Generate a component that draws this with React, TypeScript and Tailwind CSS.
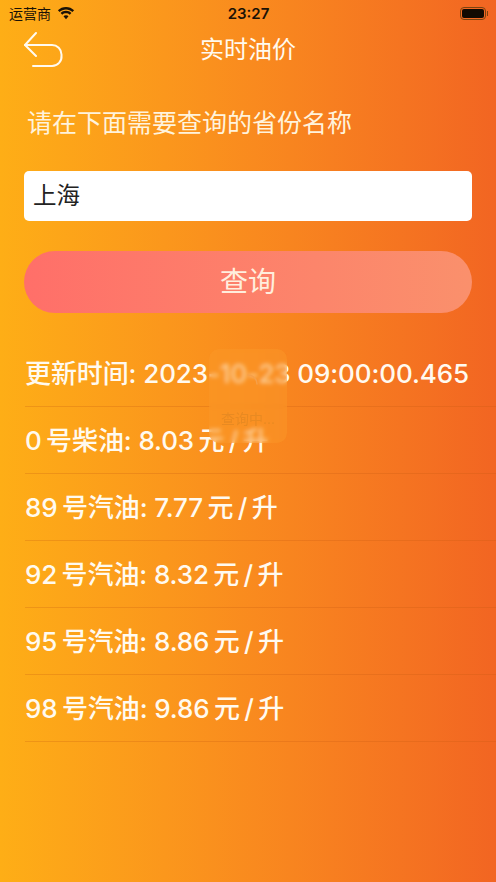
const font = "font-['Inter','Noto_Sans_CJK_SC',sans-serif]";

function Wifi() {
  return (
    <svg width="18" height="13" viewBox="0 0 18 13" fill="#1a1206">
      <path d="M9 2.600c2.500 0 4.700 1 6.400 2.500l1.700-1.800C15 1.200 12.100 0 9 0S3 1.200.9 3.300l1.700 1.800C4.300 3.600 6.500 2.600 9 2.600z" />
      <path d="M9 6.300c1.500 0 2.700.5 3.700 1.400l1.700-1.800C13 4.600 11.100 3.800 9 3.800S5 4.600 3.600 5.900l1.700 1.800c1-.9 2.200-1.400 3.700-1.400z" />
      <path d="M9 8.300c-1 0-1.900.4-2.500 1L9 12.200l2.500-2.900c-.6-.6-1.500-1-2.500-1z" />
    </svg>
  );
}

function Battery() {
  return (
    <div className="flex items-center justify-end">
      <div className="w-[26px] h-[13px] rounded-[4px] border border-[#7a4310] p-[1px]">
        <div className="w-full h-full rounded-[2px] bg-[#120a02]" />
      </div>
      <div className="w-[1px] h-[5px] bg-[#7a4310] ml-[1px]" />
    </div>
  );
}

function Row({ children }: { children: React.ReactNode }) {
  return (
    <div className="h-[67px] flex items-center border-b border-[#c2570f]/25 text-[26px] font-medium tracking-[-0.1px] text-[#fffaf0] whitespace-nowrap">
      {children}
    </div>
  );
}

export default function App() {
  return (
    <div className={`relative w-[496px] h-[882px] overflow-hidden bg-gradient-to-r from-[#feae16] to-[#f26522] ${font}`}>
      <div className="h-[27px] grid grid-cols-3 items-center pl-[9px] pr-[8px] text-[#1a1206]">
        <div className="flex items-center gap-[6px]">
          <span className="text-[14px] leading-none">运营商</span>
          <Wifi />
        </div>
        <span className="text-[15px] font-semibold leading-none text-center">23:27</span>
        <Battery />
      </div>

      <div className="h-[46px] pl-[24px] flex items-center relative">
        <svg width="40" height="38" viewBox="0 0 40 38" fill="none" stroke="#fffaf0" strokeWidth="2" strokeLinecap="round" strokeLinejoin="round">
          <path d="M12 2 1 14l11 11" />
          <path d="M1 14h27a9.500 9.500 0 0 1 9.500 9.500v1A9.500 9.500 0 0 1 28 35H9" />
        </svg>
        <div className="absolute left-0 right-0 text-center text-[24px] leading-none text-[#fffaf0]">实时油价</div>
      </div>

      <div className="mt-[27px] pl-[27px] text-[25px] leading-[46px] text-[#fff3dc]">请在下面需要查询的省份名称</div>

      <div className="mx-[24px] mt-[25px] h-[50px] bg-white rounded-[5px] flex items-center pl-[9px] text-[23.500px] text-[#222222]">上海</div>

      <div className="mx-[24px] mt-[30px] h-[62px] rounded-full bg-gradient-to-r from-[#ff6f69] to-[#fa906c] flex items-center justify-center text-[28px] text-[#ffeedd]">查询</div>

      <div className="mt-[27px] pl-[25px]">
        <Row>更新时间: 2023-10-23 09:00:00.465</Row>
        <Row>0&#8201;号柴油: 8.03&#8201;元&#8201;/&#8201;升</Row>
        <Row>89&#8201;号汽油: 7.77&#8201;元&#8201;/&#8201;升</Row>
        <Row>92&#8201;号汽油: 8.32&#8201;元&#8201;/&#8201;升</Row>
        <Row>95&#8201;号汽油: 8.86&#8201;元&#8201;/&#8201;升</Row>
        <Row>98&#8201;号汽油: 9.86&#8201;元&#8201;/&#8201;升</Row>
      </div>

      <div className="absolute left-[209px] top-[349px] w-[78px] h-[94px] rounded-[10px] bg-[#fb982a]/45 backdrop-blur-[2px] flex flex-col items-center pt-[24px] text-[14px] text-[#e88a22]">
        <svg width="22" height="22" viewBox="0 0 22 22" fill="none" stroke="#f5a04a" strokeWidth="1.500" strokeLinecap="round">
          <path d="M11 2a9 9 0 0 1 9 9" />
        </svg>
        <span className="mt-[17px] leading-none">查询中...</span>
      </div>
    </div>
  );
}
